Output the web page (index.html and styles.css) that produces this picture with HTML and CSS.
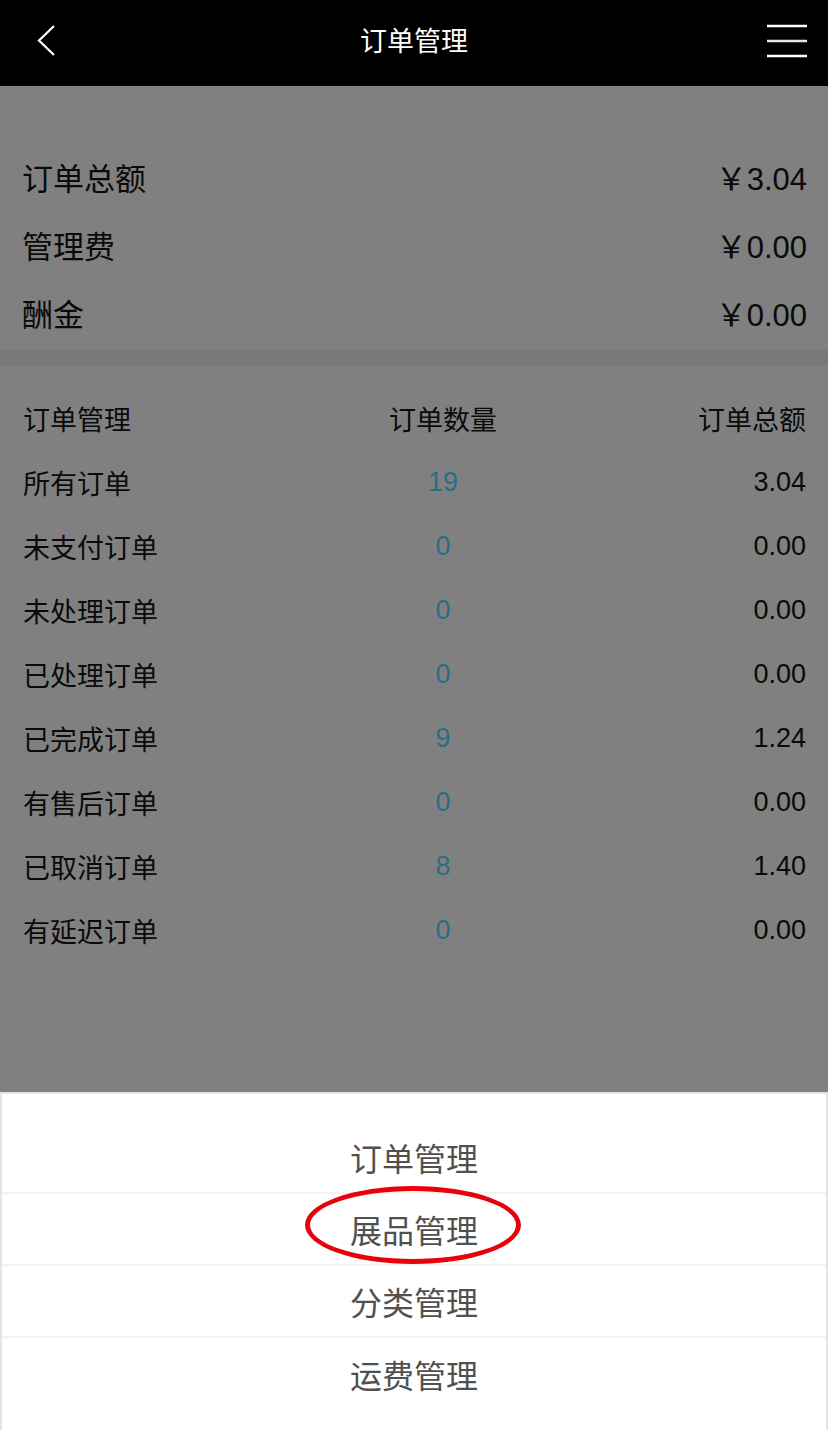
FILE: index.html
```html
<!DOCTYPE html>
<html lang="zh-CN">
    <head>
        <meta charset="UTF-8">
        <meta name="viewport" content="width=device-width, initial-scale=1.0">
        <title>订单管理</title>

        <link rel="stylesheet" href="styles.css">
    </head>
    <body>
        <div class="topo">
            <span class="voltar">
                <svg width="24" height="36" viewBox="0 0 24 36">
                    <polyline points="18,3 3,17.5 18,32" fill="none" stroke="#fff" stroke-width="2.2"/>
                </svg>
            </span>
            <h1>订单管理</h1>
            <span class="menu">
                <svg width="40" height="34" viewBox="0 0 40 34">
                    <line x1="0" y1="2" x2="40" y2="2" stroke="#fff" stroke-width="2.5"/>
                    <line x1="0" y1="17" x2="40" y2="17" stroke="#e6e6e6" stroke-width="2.5"/>
                    <line x1="0" y1="32" x2="40" y2="32" stroke="#fff" stroke-width="2.5"/>
                </svg>
            </span>
        </div>

        <div class="resumo">
            <div class="linha-resumo"><span>订单总额</span><span>￥3.04</span></div>
            <div class="linha-resumo"><span>管理费</span><span>￥0.00</span></div>
            <div class="linha-resumo"><span>酬金</span><span>￥0.00</span></div>
        </div>

        <div class="faixa"></div>

        <div class="tabela">
            <div class="linha-tabela">
                <span>订单管理</span><span class="qtd-titulo">订单数量</span><span class="total">订单总额</span>
            </div>
            <div class="linha-tabela">
                <span>所有订单</span><span class="qtd">19</span><span class="total">3.04</span>
            </div>
            <div class="linha-tabela">
                <span>未支付订单</span><span class="qtd">0</span><span class="total">0.00</span>
            </div>
            <div class="linha-tabela">
                <span>未处理订单</span><span class="qtd">0</span><span class="total">0.00</span>
            </div>
            <div class="linha-tabela">
                <span>已处理订单</span><span class="qtd">0</span><span class="total">0.00</span>
            </div>
            <div class="linha-tabela">
                <span>已完成订单</span><span class="qtd">9</span><span class="total">1.24</span>
            </div>
            <div class="linha-tabela">
                <span>有售后订单</span><span class="qtd">0</span><span class="total">0.00</span>
            </div>
            <div class="linha-tabela">
                <span>已取消订单</span><span class="qtd">8</span><span class="total">1.40</span>
            </div>
            <div class="linha-tabela">
                <span>有延迟订单</span><span class="qtd">0</span><span class="total">0.00</span>
            </div>
        </div>

        <div class="painel">
            <div class="item">订单管理</div>
            <div class="item marcado">展品管理<span class="circulo"></span></div>
            <div class="item">分类管理</div>
            <div class="item">运费管理</div>
        </div>
    </body>
</html>
```

FILE: styles.css
```css
body{
    margin: 0;
    width: 828px;
    height: 1430px;
    overflow: hidden;
    background-color: #808080;
    font-family: "Liberation Sans", "Noto Sans CJK SC", sans-serif;
    color: #0a0a0a;
    display: flex;
    flex-direction: column;
}

.topo{
    height: 86px;
    background-color: #000;
    display: grid;
    grid-template-columns: 1fr auto 1fr;
    align-items: center;
    padding: 0 21px;
    flex-shrink: 0;
    box-sizing: border-box;
}
.topo h1{
    margin: 0 0 8px 0;
    color: #fff;
    font-weight: normal;
    font-size: 27px;
}
.voltar, .menu{
    display: flex;
}
.voltar svg{
    margin: -4px 0 0 15px;
}
.menu{
    justify-content: flex-end;
}
.menu svg{
    margin-top: -4px;
}

.resumo{
    padding: 56px 21px 0 22px;
}
.linha-resumo{
    height: 68px;
    display: flex;
    align-items: center;
    justify-content: space-between;
    font-size: 31px;
}

.faixa{
    height: 16px;
    margin-top: 4px;
    background-color: #787878;
}

.tabela{
    padding: 20px 22px 0 23px;
}
.linha-tabela{
    height: 64px;
    display: grid;
    grid-template-columns: 340px 160px 1fr;
    align-items: center;
    font-size: 27px;
}
.qtd, .qtd-titulo{
    text-align: center;
}
.qtd{
    color: #2d6c89;
}
.total{
    text-align: right;
}

.painel{
    margin-top: auto;
    height: 338px;
    box-sizing: border-box;
    background-color: #fff;
    border: 2px solid #e4e4e4;
    border-bottom: 0;
    padding-top: 28px;
}
.item{
    height: 72px;
    display: flex;
    align-items: center;
    justify-content: center;
    font-size: 32px;
    color: #505050;
    border-bottom: 2px solid #f3f3f3;
    box-sizing: border-box;
}
.item:last-child{
    border-bottom: 0;
}
.marcado{
    position: relative;
}
.circulo{
    position: absolute;
    left: 50%;
    top: -8px;
    width: 216px;
    height: 78px;
    margin-left: -109px;
    box-sizing: border-box;
    border: 5px solid #e8000b;
    border-radius: 50%;
}
```
